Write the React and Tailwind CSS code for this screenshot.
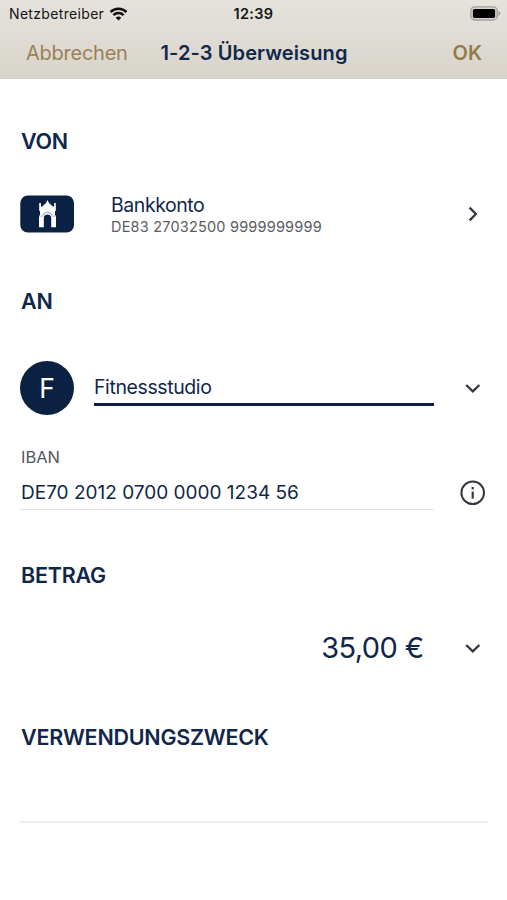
function SectionTitle({ children, className }) {
  return (
    <h2 className={`flex h-7 items-center pl-px text-[21.5px] font-semibold tracking-[-0.25px] whitespace-nowrap ${className}`}>
      <span>{children}</span>
    </h2>
  );
}

function Chevron({ d }) {
  return (
    <svg viewBox="0 0 20 20" className="size-5 shrink-0" fill="none" stroke="#343741" strokeWidth="2.3">
      <path d={d} />
    </svg>
  );
}

const DOWN = "M3.2 7 L9.8 13.4 L16.4 7";
const RIGHT = "M6.6 3.6 L12.9 10 L6.6 16.4";

function Wifi() {
  return (
    <svg viewBox="0 0 18 14" className="ml-[5px] h-3.5 w-[19px]" fill="none" stroke="#111" strokeWidth="2.5">
      <path d="M1 5 A11.4 11.4 0 0 1 17 5" />
      <path d="M3.9 8.2 A7.3 7.3 0 0 1 14.1 8.2" />
      <path d="M9 13.5 L6.2 10.7 A4.1 4.1 0 0 1 11.8 10.7 Z" fill="#111" stroke="none" />
    </svg>
  );
}

function Battery() {
  return (
    <svg viewBox="0 0 31 15" className="h-[15px] w-[31px]">
      <rect x="0.8" y="0.8" width="26.4" height="13.2" rx="4" fill="#d5d3cd" stroke="#a3a19c" strokeWidth="1.3" />
      <rect x="2.9" y="2.9" width="22.2" height="9" rx="1.6" fill="#000" />
      <path d="M28.4 5 Q30.4 5.8 30.4 7.4 Q30.4 9 28.4 9.8 Z" fill="#a3a19c" />
    </svg>
  );
}

function BankLogo() {
  return (
    <svg viewBox="0 0 54 38" className="h-[38px] w-[54px] shrink-0">
      <rect x="0.3" y="0.5" width="53.7" height="37" rx="7.5" fill="#0a2143" />
      <g fill="#fff">
        <path d="M27.5 5 L29 8 L32.6 11.2 V12.5 H22.4 V11.2 L26 8 Z" />
        <path d="M19.2 8 H20.9 V11.6 H34.1 V8 H35.8 V16 H19.2 Z" />
        <path d="M20 15.5 H35 V20.5 H36 V32.2 H31.2 V23 Q31.2 19.4 27.5 19.4 Q23.8 19.4 23.8 23 V32.2 H19 V20.5 H20 Z" />
      </g>
      <path d="M19 21.2 H23.2 M31.8 21.2 H36" stroke="#0a2143" strokeOpacity="0.4" strokeWidth="0.7" />
      <path d="M22.8 20.6 Q23.6 17.2 27.5 17.2 Q31.4 17.2 32.2 20.6" fill="none" stroke="#0a2143" strokeOpacity="0.5" strokeWidth="0.9" />
    </svg>
  );
}

function Info() {
  return (
    <svg viewBox="0 0 26 26" className="size-[26px]" fill="none" stroke="#343741" strokeWidth="2">
      <circle cx="12.7" cy="12.7" r="11.3" />
      <path d="M12.7 11.6 V18.6" strokeWidth="2.2" />
      <path d="M12.7 7 V9.3" strokeWidth="2.2" />
    </svg>
  );
}

export default function App() {
  return (
    <div className="h-[900px] w-[507px] overflow-hidden bg-white font-['Inter','Liberation_Sans',sans-serif] text-[#10274a]">
      <header className="h-[79px] bg-linear-to-b from-[#e6e3dc] to-[#d8d4cc]">
        <div className="grid h-[27px] grid-cols-3 items-center pr-[6px] pl-[9px] text-[14px] text-[#151515]">
          <div className="flex items-center whitespace-nowrap">
            <span className="tracking-[0.33px]">Netzbetreiber</span>
            <Wifi />
          </div>
          <span className="pr-[3px] text-center text-[14.5px] font-semibold tracking-[0.3px]">12:39</span>
          <div className="flex justify-end">
            <Battery />
          </div>
        </div>
        <div className="grid h-[51px] grid-cols-[1fr_auto_1fr] items-center pr-[25px] pl-[26px] text-[20px] whitespace-nowrap">
          <span className="tracking-[-0.25px] text-[#9a8156]">Abbrechen</span>
          <h1 className="font-semibold tracking-[0.1px]">1-2-3 Überweisung</h1>
          <span className="text-right font-semibold text-[#957a4b]">OK</span>
        </div>
      </header>

      <main className="flex flex-col pr-[19px] pl-5">
        <SectionTitle className="mt-12">VON</SectionTitle>
        <div className="mt-8 flex h-[54px] items-center pr-[5px]">
          <BankLogo />
          <div className="ml-[37px] flex-1 pt-px whitespace-nowrap">
            <p className="text-[19.5px] leading-6 tracking-[-0.45px]">Bankkonto</p>
            <p className="text-[14.5px] leading-[20px] tracking-[0.2px] text-[#5a5c63]">DE83 27032500 9999999999</p>
          </div>
          <Chevron d={RIGHT} />
        </div>

        <SectionTitle className="mt-[46px]">AN</SectionTitle>
        <div className="mt-[46px] flex h-[54px] items-center pr-[5px]">
          <div className="flex size-[54px] items-center justify-center rounded-full bg-[#0a2143] pt-[2px] text-[26.5px] text-white">
            <span>F</span>
          </div>
          <div className="ml-5 flex h-9 w-[340px] items-center border-b-[3px] border-[#0a2143] pt-[3px] text-[19.5px] tracking-[-0.4px]">
            <span>Fitnessstudio</span>
          </div>
          <div className="ml-auto">
            <Chevron d={DOWN} />
          </div>
        </div>

        <div className="mt-8 flex h-5 items-center pt-px pl-px text-[16.5px] text-[#55575e]">
          <span>IBAN</span>
        </div>
        <div className="mt-[9px] flex h-[34px] items-center justify-between pr-[2px]">
          <div className="flex h-[34px] w-[414px] items-center border-b border-[#e2e2e2] pt-[2px] pl-px text-[19px] whitespace-nowrap">
            <span>DE70 2012 0700 0000 1234 56</span>
          </div>
          <Info />
        </div>

        <SectionTitle className="mt-[51px]">BETRAG</SectionTitle>
        <div className="mt-[39px] flex h-10 items-center justify-end pr-[5px]">
          <span className="mr-[39.5px] text-[29px] tracking-[-0.6px] whitespace-nowrap">35,00 €</span>
          <Chevron d={DOWN} />
        </div>

        <SectionTitle className="mt-[55px]">VERWENDUNGSZWECK</SectionTitle>
        <div className="mt-[70px] h-[2px] bg-[#ededed]" />
      </main>
    </div>
  );
}
